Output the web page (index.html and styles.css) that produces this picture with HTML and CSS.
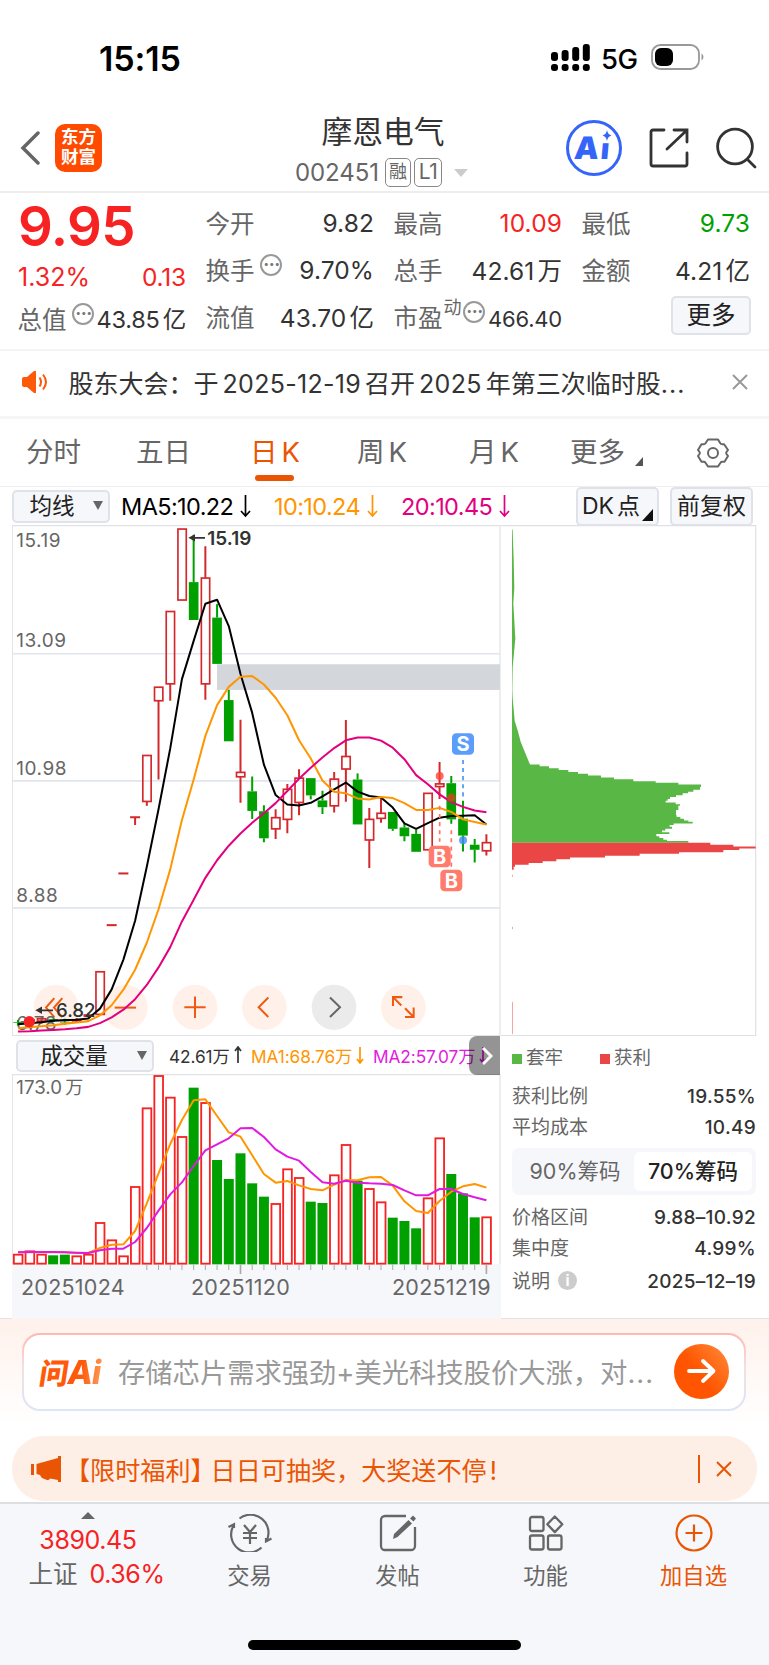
FILE: index.html
```
<!DOCTYPE html>
<html lang="zh-CN">
<head>
  <meta charset="UTF-8" />
  <title>摩恩电气 002451</title>
  <link rel="stylesheet" href="styles.css">
</head>
<body>
  <!-- 状态栏 -->
  <div class="status">
    <span class="clock">15:15</span>
    <svg class="signal" width="39" height="27" viewBox="0 0 39 27">
      <g fill="#000">
        <rect x="0" y="8" width="7" height="9" rx="3"/><rect x="10.6" y="6" width="7" height="11" rx="3"/><rect x="21.2" y="3" width="7" height="14" rx="3"/><rect x="31.8" y="0" width="7" height="17" rx="3"/>
        <rect x="0" y="20" width="7" height="7" rx="3"/><rect x="10.6" y="20" width="7" height="7" rx="3"/><rect x="21.2" y="20" width="7" height="7" rx="3"/><rect x="31.8" y="20" width="7" height="7" rx="3"/>
      </g>
    </svg>
    <span class="net">5G</span>
    <svg width="53" height="26" viewBox="0 0 53 26">
      <rect x="1" y="1" width="47" height="24" rx="8.5" fill="none" stroke="#999" stroke-width="1.8"/>
      <rect x="4" y="4" width="18" height="18" rx="6" fill="#000"/>
      <path d="M50.5 9.5v7q2-1 2-3.500t-2-3.500z" fill="#999"/>
    </svg>
  </div>

  <!-- 标题 -->
  <header class="header">
    <svg class="back" width="20" height="34" viewBox="0 0 20 34"><path d="M18 2 3 17l15 15" fill="none" stroke="#666" stroke-width="3.500" stroke-linecap="round"/></svg>
    <div class="logo">东方<br>财富</div>
    <div class="stock">
      <h1>摩恩电气</h1>
      <div class="code"><span>002451</span><i>融</i><i class="l1">L1</i><b></b></div>
    </div>
    <div class="ai-badge">
      <span>A<em>ı</em></span>
      <svg width="10" height="11" viewBox="0 0 10 12"><path d="M5 0q.8 5 5 6-4.200 1-5 6Q4.200 7 0 6q4.200-1 5-6z" fill="#3565f8"/></svg>
    </div>
    <svg class="share" width="40" height="40" viewBox="0 0 40 40" fill="none" stroke="#333" stroke-width="2.800" stroke-linecap="round"><path d="M15 2H4a2 2 0 0 0-2 2v32a2 2 0 0 0 2 2h32a2 2 0 0 0 2-2V25M25 2h13v12M37 3 18 21"/></svg>
    <svg class="search" width="41" height="42" viewBox="0 0 41 42" fill="none" stroke="#333" stroke-width="2.800" stroke-linecap="round"><circle cx="19" cy="19.500" r="17.400"/><path d="m31.500 32.500 7.500 7.500"/></svg>
  </header>

  <!-- 行情 -->
  <section class="quote">
    <div class="col first">
      <strong class="price red">9.95</strong>
      <div class="row change red"><span>1.32%</span><span>0.13</span></div>
      <div class="row cap"><label>总值</label><i class="dots">···</i><span>43.85<u>亿</u></span></div>
    </div>
    <div class="col">
      <div class="row"><label>今开</label><span>9.82</span></div>
      <div class="row"><label>换手</label><i class="dots">···</i><span>9.70%</span></div>
      <div class="row"><label>流值</label><span>43.70<u>亿</u></span></div>
    </div>
    <div class="col">
      <div class="row"><label>最高</label><span class="red">10.09</span></div>
      <div class="row"><label>总手</label><span>42.61<u>万</u></span></div>
      <div class="row pe"><label>市盈</label><sup>动</sup><i class="dots">···</i><span>466.40</span></div>
    </div>
    <div class="col">
      <div class="row"><label>最低</label><span class="green">9.73</span></div>
      <div class="row"><label>金额</label><span>4.21<u>亿</u></span></div>
      <div class="row"><button class="more">更多</button></div>
    </div>
  </section>

  <!-- 公告 -->
  <div class="news">
    <svg width="26" height="22" viewBox="0 0 26 22"><path d="M0 8q0-2 2-2h3l7-6q2-1 2 1v20q0 2-2 1l-7-6H2q-2 0-2-2z" fill="#fc5908"/><path d="M17.500 6.500q3 4.500 0 9M21 3.500q6 7.500 0 15" fill="none" stroke="#fc5908" stroke-width="2"/></svg>
    <p>股东大会：于<span>2025-12-19</span>召开<span>2025</span>年第三次临时股<em>...</em></p>
    <svg class="close" width="16" height="16" viewBox="0 0 16 16"><path d="m1 1 14 14M15 1 1 15" stroke="#999" stroke-width="2"/></svg>
  </div>

  <nav class="tabs">
    <a>分时</a><a>五日</a><a class="on">日<s>K</s></a><a>周<s>K</s></a><a>月<s>K</s></a><a class="drop">更多</a>
    <svg width="32" height="32" viewBox="0 0 32 32" fill="none" stroke="#666" stroke-width="2"><path d="M11 2.500h10l2.300 3.800q.6 1 1.800 1h2L31 13l-1.500 2q-.6 1 0 2L31 19l-3.500 5.700h-2.200q-1.200 0-1.800 1L21 29.500H11l-2.500-3.800q-.6-1-1.800-1H4.500L1 19l1.500-2q.6-1 0-2L1 13l3.500-5.700h2.200q1.200 0 1.800-1z" stroke-linejoin="round"/><circle cx="16" cy="16" r="5"/></svg>
  </nav>

  <!-- 均线 -->
  <div class="toolbar">
    <button class="select">均线</button>
    <span class="ma ma5">MA5:10.22<svg width="11" height="24" viewBox="0 0 11 24"><path d="M5.500 1v21M1 17l4.500 5 4.500-5"/></svg></span>
    <span class="ma ma10">10:10.24<svg width="11" height="24" viewBox="0 0 11 24"><path d="M5.500 1v21M1 17l4.500 5 4.500-5"/></svg></span>
    <span class="ma ma20">20:10.45<svg width="11" height="24" viewBox="0 0 11 24"><path d="M5.500 1v21M1 17l4.500 5 4.500-5"/></svg></span>
    <button class="tool dk">DK<u>点</u></button>
    <button class="tool">前复权</button>
  </div>

  <main class="charts">
    <div class="left">
      <svg id="kline" width="489" height="511" viewBox="36 29 1467 1512" preserveAspectRatio="none"></svg>
      <div class="vol-bar">
        <button class="select">成交量</button>
        <span class="v">42.61万<svg width="8" height="18" viewBox="0 0 8 18"><path d="M4 17V1M1 5l3-4 3 4"/></svg></span>
        <span class="v ma1">MA1:68.76万<svg width="8" height="18" viewBox="0 0 8 18"><path d="M4 1v16M1 13l3 4 3-4"/></svg></span>
        <span class="v ma2">MA2:57.07万<svg width="8" height="18" viewBox="0 0 8 18"><path d="M4 1v16M1 13l3 4 3-4"/></svg></span>
        <div class="next"><svg width="12" height="20" viewBox="0 0 12 20"><path d="m2 2 8 8-8 8" fill="none" stroke="#fff" stroke-width="3"/></svg></div>
      </div>
      <svg id="volume" width="489" height="201" viewBox="36 132 1467 603"></svg>
      <div class="dates"><span>20251024</span><span>20251120</span><span>20251219</span></div>
    </div>

    <!-- 筹码分布 -->
    <aside class="chips">
      <svg id="chips" width="256" height="511" viewBox="3 29 768 1512" preserveAspectRatio="none"></svg>
      <div class="legend"><span class="lose">套牢</span><span class="gain">获利</span></div>
      <dl><dt>获利比例</dt><dd>19.55%</dd></dl>
      <dl><dt>平均成本</dt><dd>10.49</dd></dl>
      <div class="seg"><span>90%筹码</span><span class="on">70%筹码</span></div>
      <dl><dt>价格区间</dt><dd>9.88–10.92</dd></dl>
      <dl><dt>集中度</dt><dd>4.99%</dd></dl>
      <dl class="note"><dt>说明<i>i</i></dt><dd>2025–12–19</dd></dl>
    </aside>
  </main>

  <!-- 问AI -->
  <section class="ask">
    <div class="ask-box">
      <span class="ask-logo">问<b>Ai</b></span>
      <p>存储芯片需求强劲+美光科技股价大涨，对<em>...</em></p>
      <div class="go"><svg width="30" height="26" viewBox="0 0 30 26"><path d="M2 13h24M16 3l10.500 10L16 23" fill="none" stroke="#fff" stroke-width="3.800" stroke-linecap="round" stroke-linejoin="round"/></svg></div>
    </div>
  </section>

  <div class="promo">
    <svg width="31" height="26" viewBox="0 0 31 26" fill="#ea5504"><path d="M0 8h3v11H0zM5.500 8 27 2V0h3v26h-3v-2l-8-1.500q-1 2-3 1.500l-5-2q-1-1-2-3l-3.500-1z"/></svg>
    <p>【限时福利<u>】</u>日日可抽奖，大奖送不停<s>!</s></p>
    <svg class="x" width="16" height="16" viewBox="0 0 16 16"><path d="m1 1 14 14M15 1 1 15" stroke="#ea5504" stroke-width="2"/></svg>
  </div>

  <footer class="bottom">
    <div class="index">
      <b></b>
      <span class="red">3890.45</span>
      <div><label>上证</label><span class="red">0.36%</span></div>
    </div>
    <div class="item">
      <svg width="44" height="38" viewBox="0 0 44 38" fill="none" stroke="#666" stroke-width="2.200"><path d="M11.500 4.500A18 18 0 0 1 38.500 27M33.500 33.500A18 18 0 0 1 5.500 11.500M.5 13 6 10.300V14M43.500 24.500 38 27.500V24"/><path d="m16 11 6 7 6-7M15 19h14M15 24h14M22 18v12"/></svg>
      <span>交易</span>
    </div>
    <div class="item">
      <svg width="38" height="38" viewBox="0 0 38 38" fill="none" stroke="#666" stroke-width="2.300"><path d="M27 2H6a4 4 0 0 0-4 4v26a4 4 0 0 0 4 4h26a4 4 0 0 0 4-4V13"/><path d="m14 25 1-5L29.500 6l3.500 3.500L18.500 23zM31 4.500 34 1.500 37 4.500 34.500 7.500z" fill="#666" stroke="none"/></svg>
      <span>发帖</span>
    </div>
    <div class="item">
      <svg width="36" height="38" viewBox="0 0 36 38" fill="none" stroke="#666" stroke-width="2.300"><rect x="2" y="3" width="13.500" height="14" rx="2"/><rect x="2" y="21.500" width="13.500" height="14" rx="2"/><rect x="20" y="21.500" width="13.500" height="14" rx="2"/><path d="m26.800 2.500 7.500 7.800-7.500 7.800-7.500-7.800z" stroke-linejoin="round"/></svg>
      <span>功能</span>
    </div>
    <div class="item add">
      <svg width="38" height="38" viewBox="0 0 38 38" fill="none" stroke="#ea5504" stroke-width="2.200"><circle cx="19" cy="19" r="17.500"/><path d="M10.500 19h17M19 10.500v17"/></svg>
      <span>加自选</span>
    </div>
    <div class="home"></div>
  </footer>

<script src="charts.js"></script>
</body>
</html>
```

FILE: styles.css
```
*{box-sizing:border-box}
body{margin:0;width:769px;background:#fff;color:#333;font-family:Inter,"Noto Sans CJK SC",sans-serif;font-size:25px}
h1,p,dl,dd{margin:0}
i,em{font-style:normal}
u,s{text-decoration:none}
svg{display:block;flex:none}
button{font-family:inherit;padding:0;border:2px solid #dfe2e8;border-radius:5px;background:#f6f7fa;color:#222}
.red{color:#f72323}
.green{color:#00a000}

.status{height:116px;display:flex;align-items:center;padding-left:99px}
.clock{width:452px;color:#000;font-size:34px;font-weight:600;letter-spacing:-.1px}
.net{width:50px;margin:2px 0 0 11px;color:#000;font-size:27.500px;font-weight:500;letter-spacing:-.6px}
.status svg{margin-top:-2px}

.header{height:77px;border-bottom:2px solid #ededed;display:flex;align-items:center;padding:0 12px 12px 20px}
.logo{width:47px;height:48px;margin-left:15px;padding-top:3px;border-radius:10px;background:#ff4a00;color:#fff;font-size:17.500px;font-weight:700;line-height:20px;text-align:center}
.stock{width:242px;margin-left:160px;padding-top:9px}
.stock h1{height:41px;font-size:30.800px;font-weight:400;line-height:34px;text-align:center}
.code{display:flex;align-items:center;margin-left:33px;color:#666;font-size:24px;line-height:34px}
.code span{width:90px;letter-spacing:-.1px}
.code i{width:26px;height:29px;margin-right:3px;border:1.500px solid #888;border-radius:5px;font-size:18px;line-height:25px;text-align:center}
.code .l1{width:28px;font-size:21px;letter-spacing:-.5px}
.code b{margin-left:9px;border:7px solid transparent;border-top:8px solid #ccc;border-bottom:0}
.ai-badge{position:relative;width:56px;height:56px;margin-left:62px;border:3px solid #3565f8;border-radius:50%;color:#3565f8;font-size:31px;font-weight:900;line-height:50px;text-align:center}
.ai-badge span{display:block;transform:skewX(-5deg);letter-spacing:2px;padding-right:2px}
.ai-badge em{display:inline-block;font-size:29px}
.ai-badge svg{position:absolute;right:7px;top:7px}
.share{margin-left:27px}
.search{margin-left:27px}

.quote{height:158px;display:grid;grid-template-columns:168px 168px 168px 168px;gap:20px;padding:6px 0 0 18px;border-bottom:2px solid #f4f4f4}
.quote .row{height:47px;display:flex;align-items:center;white-space:nowrap}
.quote label{margin-left:-.6px;color:#666;font-size:24.500px}
.quote .row>span:last-child{margin-left:auto;font-size:24.500px;letter-spacing:.1px}
.quote u{margin-left:3px}
.quote .first .row>span:last-child{letter-spacing:-.2px}
.price{display:block;height:58px;font-size:54.500px;font-weight:600;line-height:55px;letter-spacing:-.6px}
.quote .change{height:39px;font-size:25px;letter-spacing:0}
.quote .cap{height:44px}
.dots{width:22px;height:22px;margin:-9px 0 0 6px;border:2px solid #999;border-radius:50%;color:#777;font-size:18px;font-weight:700;line-height:18px;text-align:center;letter-spacing:-.5px}
.quote sup{margin:-17px 2px 0 1px;color:#666;font-size:18px;line-height:20px}
.pe .dots{margin-left:0}
.quote .pe>span:last-child{font-size:22px;padding-top:4px;letter-spacing:-.2px}
.quote .cap>span:last-child{font-size:23.500px}
.more{width:80px;height:39px;margin:-3px -1px 0 auto;font-size:24.500px;line-height:30px}

.news{height:68px;display:flex;align-items:center;padding:0 0 3px 22px;border-bottom:3px solid #f5f5f5}
.news p{width:663px;margin-left:20.500px;font-size:25px;white-space:nowrap}
.news span{margin:0 4px;letter-spacing:.3px}
.news em{letter-spacing:1px}

.tabs{position:relative;height:68px;display:flex;align-items:center;border-bottom:1px solid #eee;color:#666;font-size:27.500px}
.tabs a{position:relative;width:110px;height:66px;padding-left:26px;line-height:64px;white-space:nowrap}
.tabs a:nth-child(2){width:114px}
.tabs a:nth-child(3){width:107px;color:#ea5504}
.tabs a:nth-child(4){width:112px}
.tabs a:nth-child(5){width:101px}
.tabs s{margin-left:4px}
.tabs .on::after{content:"";position:absolute;left:31px;bottom:5px;width:39px;height:6px;border-radius:3px;background:#ea5504}
.tabs .drop{width:153px}
.tabs .drop::after{content:"";position:absolute;left:91px;top:37px;border-left:8px solid transparent;border-bottom:9px solid #555}

.toolbar{height:38px;display:flex;align-items:center;padding-left:12px}
.select{position:relative;flex:none;width:98px;height:33px;padding-right:18px;font-size:22.500px;line-height:28px;text-align:center}
.select::after{content:"";position:absolute;right:5px;top:9px;border:5px solid transparent;border-top:9px solid #666;border-bottom:0}
.ma{flex:none;display:flex;align-items:center;gap:7px;margin-left:12px;font-size:23.500px;letter-spacing:-.6px}
.ma5{width:141px;margin-left:11px;color:#000}
.ma10{color:#ff9500;width:115px}
.ma20{color:#e3007f;width:130px}
.ma svg,.v svg{fill:none;stroke:currentColor;stroke-width:1.700}
.tool{width:83px;height:39px;margin-left:11px;font-size:23px;line-height:34px;white-space:nowrap}
.dk{position:relative;margin-left:45px;text-align:left;padding-left:4px}
.dk u{margin-left:3px}
.dk::after{content:"";position:absolute;right:4px;bottom:3px;border-left:11px solid transparent;border-bottom:12px solid #111}

.charts{display:flex;height:794px;padding-left:12px;border-bottom:1px solid #e0e2e6}
.left{width:489px}
.vol-bar{position:relative;display:flex;align-items:center;height:38px;padding:2px 0 0 4px}
.vol-bar .select{width:138px;height:32px;padding-right:22px}
.v{flex:none;display:flex;align-items:center;gap:4px;width:82px;margin:-2px 0 0 15px;font-size:17.300px;white-space:nowrap;letter-spacing:-.1px}
.ma1{width:122px;margin-left:0;color:#ff9500}
.ma2{width:130px;margin-left:0;color:#e01be0}
.vol-bar .next{position:absolute;right:1px;top:0;width:31px;height:39px;padding:10px 0 0 12px;border-radius:8px 0 0 8px;background:rgba(0,0,0,.42)}
.dates{display:grid;grid-template-columns:170px 201px 110px;height:44px;padding:0 0 0 9px;background:#f6f7fa;color:#666;font-size:21.500px;line-height:24px;letter-spacing:.25px}
#volume{background:linear-gradient(#fff 190px,#f6f7fa 190px)}

.chips{width:256px}
.legend{display:flex;height:45px;padding:0 0 0 11px;color:#666;font-size:18.500px;line-height:42px}
.legend span{width:88px}
.legend span::before{content:"";display:inline-block;width:10px;height:10px;margin-right:4px;background:#59b845}
.legend .gain::before{background:#ea4646}
.chips dl{display:flex;justify-content:space-between;height:31px;padding:0 1px 0 11px;font-size:19px;line-height:31px}
.chips dt{color:#666}
.chips dd{font-weight:500;letter-spacing:.3px}
.seg{display:flex;width:244px;height:47px;margin:5px 0 7px 11px;padding:4px;border-radius:7px;background:#f6f7fa;color:#666;font-size:21.500px;line-height:39px}
.seg span{width:118px;text-align:center}
.seg .on{border-radius:6px;background:#fff;color:#222;font-weight:500}
.chips .note{margin-top:2px}
.note i{display:inline-block;width:19px;height:19px;margin-left:8px;border-radius:50%;background:#ccc;color:#fff;font-size:15px;font-weight:700;line-height:19px;text-align:center;vertical-align:2px}

.ask{height:117px;padding:14px 23px 0 22px;background:linear-gradient(#fff1eb,#fff 105px)}
.ask-box{display:flex;align-items:center;height:78px;padding-left:16px;border:2px solid transparent;border-radius:18px;background:linear-gradient(#fff,#fff) padding-box,linear-gradient(#ffb9ad,#f3dfe6 45%,#dbe6f6) border-box}
.ask-logo{width:78px;margin-top:-3px;color:#ff5a0a;font-size:29px;font-weight:900;white-space:nowrap;letter-spacing:-1px;transform:skewX(-9deg)}
.ask-logo b{font-size:33px;font-weight:800;background:linear-gradient(90deg,#ff5a0a 40%,#ff9350);-webkit-background-clip:text;background-clip:text;color:transparent}
.ask p{width:537px;margin-top:-2px;color:#999;font-size:27.300px;white-space:nowrap}
.ask em{letter-spacing:1px}
.go{flex:none;width:55px;height:55px;margin:-1px 0 0 19px;padding:14px 0 0 13px;border-radius:50%;background:linear-gradient(50deg,#ff5500 45%,#ff8c3c)}

.promo{display:flex;align-items:center;height:65px;margin:0 12px;padding:0 25px 0 19px;border-radius:32px;background:#fdeee6;color:#ea5504;font-size:25.100px}
.promo p{margin-left:3px;white-space:nowrap;padding-top:1px}
.promo u{letter-spacing:-5px}
.promo s{margin-left:3px}
.promo .x{margin-left:auto;box-sizing:content-box;padding:6px 0 6px 16px;border-left:2px solid #ea5504}

.bottom{position:relative;display:flex;height:163px;margin-top:1px;padding-top:8px;border-top:2px solid #dcdee2;background:#f6f7fa;color:#666}
.index{width:176px;display:flex;flex-direction:column;align-items:center;font-size:25px;letter-spacing:-.4px}
.index b{border:7px solid transparent;border-bottom:7px solid #666;border-top:0}
.index>span{height:38px;margin-top:2px;line-height:39px}
.index label{margin-right:12px;font-size:24.500px;letter-spacing:0}
.index div{margin-left:17px;line-height:30px}
.item{width:148px;display:flex;flex-direction:column;align-items:center;padding:2px 1px 0 0;font-size:22.300px}
.item span{line-height:30px;margin-top:auto;margin-bottom:74px}
.add{color:#ea5504}
.home{position:absolute;left:248px;bottom:15px;width:273px;height:10px;border-radius:6px;background:#000}
```

FILE: charts.js
```
// === Dados (unidades 3x) ===
const STEP = 35.13, X0 = 54, BODY = 28;
const RED = '#d4292c', GREEN = '#00a000';

// cor, máxima, topo, base, mínima
const candles = [
  ['g',1494,1500,1502,1510],['r',1490,1492,1500,1504],['r',1486,1489,1497,1505],['g',1490,1491,1495,1499],['g',1490,1499,1501,1508],
  ['r',1488,1492,1496,1500],['r',1472,1478,1482,1486],['r',1350,1350,1477,1477],['d',1213,1213,1213,1213],['d',1060,1060,1060,1060],
  ['d',894,894,894,917],['r',710,710,847,860],['r',508,508,549,782],['r',284,284,499,549],['r',40,40,251,251],
  ['g',58,198,310,310],['r',92,185,499,546],['g',263,303,440,440],['g',517,547,669,669],['r',605,760,774,851],
  ['g',773,817,875,899],['g',858,876,956,968],['r',870,894,928,958],['r',795,810,900,941],['r',752,777,850,888],
  ['g',778,778,829,841],['g',815,844,864,884],['r',760,780,860,880],['r',606,713,751,848],['g',764,782,915,915],
  ['r',866,899,961,1044],['r',835,881,897,910],['g',878,878,928,934],['g',912,924,950,965],['g',930,943,996,996],
  ['r',822,822,990,990],['r',730,794,803,840],['g',772,793,900,913],['g',845,898,948,995],['g',958,975,990,1028],['r',944,968,993,1007]
];
const ma5  = [1506,1503,1500,1496,1494,1493,1489,1460,1403,1315,1200,1040,870,690,485,372,262,250,328,470,585,738,828,856,859,851,832,811,791,818,831,835,865,912,928,911,895,890,889,888,915];
const ma10 = [1518,1515,1512,1509,1505,1501,1497,1480,1450,1404,1345,1265,1166,1048,902,782,653,562,508,478,476,501,540,592,666,720,785,818,823,838,841,834,837,852,872,872,866,878,900,908,915];
const ma20 = [1528,1527,1525,1523,1521,1518,1514,1503,1486,1463,1432,1390,1338,1278,1202,1138,1073,1021,978,942,910,882,852,816,780,747,717,689,666,658,658,667,688,722,769,796,826,849,863,874,879];

const vol = [672,662,672,676,674,677,672,577,629,677,469,233,136,201,319,173,217,390,447,370,460,500,520,416,442,515,519,434,343,452,475,515,563,573,595,503,323,432,490,562,560];
const volUp = 'rrrggrrrrrrrrrrgrgggggrrrggrrgrrgggrrgggr';
const vma1 = [667,667,667,667,667,669,669,654,644,643,603,520,430,342,270,211,208,258,307,320,376,432,458,453,466,477,481,464,450,451,442,441,467,514,543,549,513,485,469,462,473];
const vma2 = [667,666,666,666,667,668,669,661,656,656,636,594,542,493,457,408,361,343,325,295,294,321,358,380,392,426,457,461,452,458,460,461,465,481,496,496,477,477,492,502,511];

// y, x de cada degrau
const lose = [[738,119],[743,147],[749,176],[754,205],[760,234],[765,264],[770,303],[776,342],[781,400],[787,467],[792,535],[797,603],[804,600],[812,580],[818,564],[823,548],[829,528],[834,510],[840,503],[845,497],[850,527],[855,540],[860,535],[872,528],[888,530],[893,541],[898,552],[903,565],[907,578],[912,521],[917,509],[922,516],[928,496],[933,486],[938,508],[943,469],[950,478],[955,490],[960,501],[964,565],[969,565]];
const gain = [[969,631],[975,700],[980,767],[986,718],[991,670],[997,537],[1002,419],[1008,315],[1013,210],[1018,169],[1024,128],[1029,86],[1034,45],[1040,41],[1049,37]];

const cx = i => X0 + i * STEP;
const line = (d, c, w=6) => `<polyline points="${d.map((y,i)=>cx(i).toFixed(1)+','+y).join(' ')}" fill="none" stroke="${c}" stroke-width="${w}" stroke-linejoin="round"/>`;
const hline = (y, x2=1500) => `<path d="M37 ${y}H${x2}" stroke="#e1e6ed" stroke-width="5"/>`;

function candle([t,h,top,bot,l], i){
  const x = cx(i), c = t === 'g' ? GREEN : RED;
  if(t === 'd') return `<path d="M${x-15} ${top}h30M${x} ${top}V${l}" stroke="${c}" stroke-width="6"/>`;
  const wick = `<path d="M${x} ${h}V${top}M${x} ${bot}V${l}" stroke="${c}" stroke-width="6"/>`;
  if(t === 'g') return wick + `<rect x="${x-BODY/2-.5}" y="${top}" width="${BODY+1}" height="${bot-top}" fill="${c}"/>`;
  return wick + `<rect x="${x-12}" y="${top+1}" width="25" height="${bot-top-1}" fill="none" stroke="${c}" stroke-width="5"/>`;
}

function tag(x, y, t, c){
  return `<rect x="${x-33}" y="${y-32}" width="66" height="64" rx="13" fill="${c}"/><text x="${x}" y="${y+21}" text-anchor="middle" fill="#fff" font-size="60" font-weight="700">${t}</text>`;
}

// === K线 ===
const btns = [168,376,585,793,1002,1210];
const icons = [
  'M163 1429l-25 28 25 28M187 1429l-25 28 25 28','M344 1457h64','M553 1456h64M585 1424v64',
  'M805 1427l-29 29 29 29','M990 1427l30 29-30 29',
  'M1179 1452v-26h28M1179 1426l25 25M1215 1485h26v-28M1241 1485l-26-26'
];
document.getElementById('kline').innerHTML =
  `<path d="M37 1540V31H1500V1540Z" fill="none" stroke="#e0e2e6" stroke-width="3.500"/>` +
  hline(410) + hline(786) + hline(1162) +
  `<rect x="651" y="441" width="849" height="76" fill="#d3d7dc"/>` +
  btns.map((x,i)=>`<circle cx="${x}" cy="1456" r="67" fill="${i===4?'#ebebeb':'#fff1ea'}"/><path d="${icons[i]}" fill="none" stroke="${i===4?'#666':'#ef5a10'}" stroke-width="6"/>`).join('') +
  `<g fill="#666" font-size="57" letter-spacing="1.500"><text x="49" y="94">15.19</text><text x="49" y="390">13.09</text><text x="49" y="768">10.98</text><text x="49" y="1144">8.88</text><text x="49" y="1522">6.78</text></g>` +
  candles.map(candle).join('') +
  line(ma5,'#000') + line(ma10,'#ff9500') + line(ma20,'#e3007f') +
  `<g stroke-width="5" stroke-dasharray="12 12"><path d="M1319 860V966M1354 932V1040" stroke="#ff7362"/><path d="M1389 724V840" stroke="#4a92f5"/></g>` +
  `<g fill-opacity=".8"><circle cx="1319" cy="772" r="12" fill="#ff4438"/><circle cx="1354" cy="836" r="13" fill="#d8421c"/><circle cx="1389" cy="962" r="12" fill="#3d8cf5"/></g>` +
  tag(1319,1010,'B','#ff7b6b') + tag(1354,1081,'B','#ff7b6b') + tag(1389,677,'S','#5a9dfb') +
  `<g fill="#333"><path d="M582 67h33M122 1465h37" stroke="#333" stroke-width="5"/><path d="M565 67l20-11v22zM106 1465l20-11v22z"/><text x="622" y="87" font-size="57" font-weight="600">15.19</text><text x="168" y="1484" font-size="56" font-weight="500">6.82</text></g>` +
  `<circle cx="88" cy="1499" r="17" fill="#f72323"/>`;

// === 成交量 ===
document.getElementById('volume').innerHTML =
  `<path d="M37 703V134H1500V703" fill="none" stroke="#e0e2e6" stroke-width="3.500"/>` +
  `<text x="49" y="191" fill="#666" font-size="56">173.0<tspan dx="10" font-size="54">万</tspan></text>` +
  vol.map((y,i)=> volUp[i]==='g'
    ? `<rect x="${cx(i)-15}" y="${y}" width="30" height="${703-y}" fill="${GREEN}"/>`
    : `<rect x="${cx(i)-12.5}" y="${y+2}" width="26" height="${699-y}" fill="#fff" stroke="#f72323" stroke-width="5.500"/>`).join('') +
  line(vma1,'#ff9500') + line(vma2,'#e01be0') +
  vol.map((y,i)=> i<11 ? '' : `<path d="M${cx(i)} 704V${i===19||i===40?732:720}" stroke="#aaa" stroke-width="${i===19||i===40?5:3}"/>`).join('');

// === 筹码 ===
function steps(a){
  let d = `M36 ${a[0][0]}`;
  a.forEach(([y,x],i)=>{ d += `V${y}H${x}`; if(a[i+1]) d += `V${a[i+1][0]}`; });
  return d + 'H36Z';
}
document.getElementById('chips').innerHTML =
  `<path d="M2 31H767V1540H2" fill="none" stroke="#dde0e5" stroke-width="3.500"/>` +
  `<path d="M36 40L38 45 41 130 43 215 40 260 46 365 38 450 37 515 38 540 44 608 54 640 62 670 90 738V744H36Z" fill="#59b845"/>` +
  `<path d="${steps(lose)}" fill="#59b845"/><path d="${steps(gain)}" fill="#ea4646"/>` +
  `<path d="M37.500 1064V1070M37.500 1218V1225M37.500 1440V1535" stroke="#ea4646" stroke-width="2.500" stroke-opacity=".6"/>`;
```
